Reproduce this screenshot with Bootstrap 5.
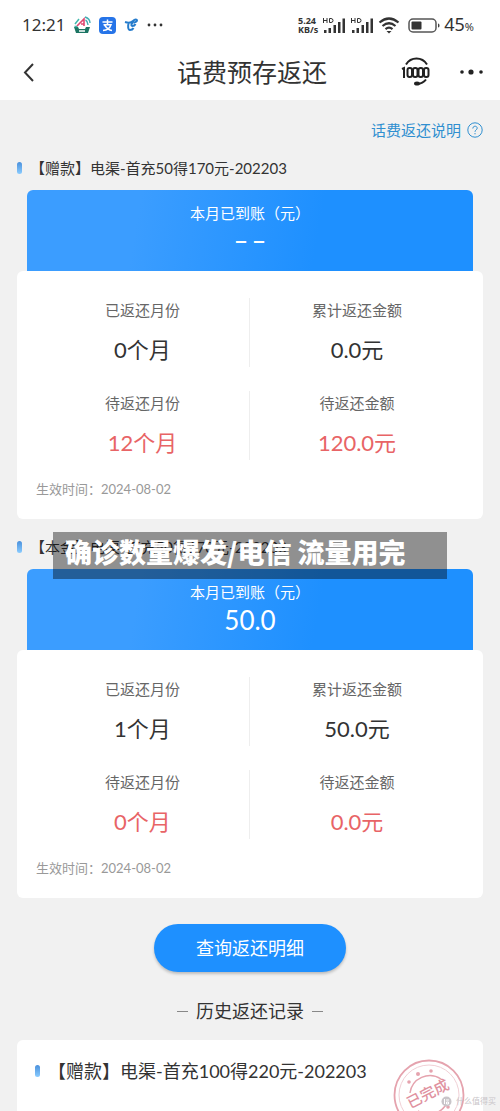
<!DOCTYPE html>
<html lang="zh-CN">
<head>
<meta charset="utf-8">
<meta name="viewport" content="width=device-width, initial-scale=1">
<title>话费预存返还</title>
<link href="https://cdn.jsdelivr.net/npm/bootstrap@5.3.0/dist/css/bootstrap.min.css" rel="stylesheet">
<style>
  body { font-family: Lato, "Noto Sans CJK SC", sans-serif; background: #f1f1f1; color: #333; font-size: 15px; line-height: 24px; overflow-x: hidden; }
  svg { display: block; flex: none; }
  .status { height: 50px; padding: 0 26px 0 22px; font-size: 17px; font-family: "Noto Sans", sans-serif; }
  .speed { font-size: 9px; line-height: 9px; font-weight: 700; }
  .battery-level { font-size: 18px; }
  .battery-level small { font-size: 11px; }
  .app-bar { height: 50px; padding: 0 16px 6px 20px; }
  .app-bar h1 { font-size: 25px; line-height: 36px; font-weight: 400; }
  .side { flex: 1 1 0; }
  .actions { gap: 27px; }
  .icon-btn { display: block; border: 0; background: none; padding: 0; color: #333; }
  .page { padding: 0 17px; }
  .help { height: 46px; padding-top: 14px; gap: 6px; color: #2f8fd0; }
  .plan { margin-bottom: 6px; }
  .plan-title { height: 44px; font-size: 15px; font-weight: 400; }
  .pill { width: 5px; height: 12px; border-radius: 3px; background: linear-gradient(#4a90dc, #8accff); flex: none; }
  .credit { margin: 0 10px; height: 81px; padding-top: 11px; border-radius: 6px 6px 0 0; color: #fff; background: linear-gradient(100deg, #3b9dff 25%, #1e90ff 65%); }
  .amount { font-size: 26px; line-height: 32px; }
  .amount-none { font-family: "Noto Sans", sans-serif; font-size: 24px; line-height: 28px; font-weight: 500; }
  .panel { background: #fff; border-radius: 6px; padding: 27px 19px 20px; }
  .stats { row-gap: 24px; }
  .stat { color: #666; }
  .stat:nth-child(odd) { border-right: 1px solid #eee; }
  .stat dd { font-size: 22px; line-height: 32px; margin: 12px 0 1px; color: #333; }
  .stat dt { font-weight: 400; }
  .stat .due { color: #e86466; }
  .since { font-size: 13px; line-height: 20px; color: #999; margin-top: 19px; }
  .caption { top: 7px; left: 36px; right: 36px; height: 47px; padding: 0 12px; background: rgba(0,0,0,.4); color: #fff; font-size: 27px; line-height: 40px; font-weight: 900; font-family: "Noto Sans CJK SC", sans-serif; }
  .detail-btn { width: 41%; height: 48px; margin-top: 20px; border: 0; background: #1e90ff; color: #fff; font-size: 18px; box-shadow: 0 2px 3px rgba(0,0,0,.22); }
  .detail-btn:hover { background: #1e90ff; color: #fff; }
  .history-title { font-size: 18px; font-weight: 400; line-height: 28px; margin: 25px 0 15px; }
  .rule { width: 11px; height: 1px; background: #888; }
  .record { background: #fff; border-radius: 6px 6px 0 0; height: 71px; padding: 17px 18px 0; overflow: hidden; }
  .record h3 { font-size: 18px; line-height: 28px; font-weight: 400; }
  .stamp { right: 16px; top: 17px; }
  .credit-mark { right: 4px; bottom: 4px; font-size: 8px; line-height: 12px; color: #c9c5c9; }
</style>
</head>
<body>
<header class="bg-white">
  <div class="status d-flex align-items-center justify-content-between">
    <div class="d-flex align-items-center gap-2">
      <span>12:21</span>
      <svg width="18" height="18" viewBox="0 0 18 18" fill="none"><path d="M1 11h4l1 2h6l1-2h4l-2 6H3z" fill="#1c7563"/><path d="M6 15h6" stroke="#fff" stroke-width="1.500"/><path d="M2 8l4-5M1.500 10.500h3" stroke="#42b7ac" stroke-width="1.500"/><path d="M4 10l7-7v7M8 8h3" stroke="#df4770" stroke-width="1.600"/><path d="M12 1c3 1 5 3 5 6M12.500 4c2 1 2 2 2.500 5" stroke="#42aeb4" stroke-width="1.400"/></svg>
      <svg width="17" height="17" viewBox="0 0 17 17"><rect width="17" height="17" rx="4" fill="#2674e8"/><path d="M3.500 5h10M8.500 2.500v5M4.500 7.800h7.500c-1 3-4 5.500-8 5.700M5.500 8c2 3 4 5 7.500 5.500" fill="none" stroke="#fff" stroke-width="1.500"/></svg>
      <svg width="14" height="14" viewBox="0 0 14 14" fill="none" stroke="#267ccc" stroke-width="2"><path d="M1 4c3 1 6 1 8-1 2-2 4-2 4-.5 0 1-2 2-3.500 2M5 4c-1.500 4-1 8 1 8 1.500 0 3-1 3.500-2M9 4c-2 2-2 4-.5 4 1.500 0 2.500-1 3-2"/></svg>
      <svg width="17" height="6" viewBox="0 0 17 6" fill="#333"><circle cx="3" cy="3" r="1.400"/><circle cx="9" cy="3" r="1.400"/><circle cx="15" cy="3" r="1.400"/></svg>
    </div>
    <div class="d-flex align-items-center gap-1">
      <div class="speed">5.24<br>KB/s</div>
      <svg width="24" height="18" viewBox="0 0 24 18" fill="#333"><path d="M2 14h2.500v3H2zM6.500 12H9v5H6.500zM11.500 9H14v8h-2.500zM16 6h2.500v11H16zM20.500 2.500H23V17h-2.500z"/><path d="M1.500 2v5M5 2v5M1.500 4.500H5M7.500 2.500v4h1.500q2 0 2-2t-2-2z" fill="none" stroke="#333"/></svg>
      <svg width="24" height="18" viewBox="0 0 24 18" fill="#333"><path d="M2 14h2.500v3H2zM6.500 12H9v5H6.500zM11.500 9H14v8h-2.500zM16 6h2.500v11H16zM20.500 2.500H23V17h-2.500z"/><path d="M1.500 2v5M5 2v5M1.500 4.500H5M7.500 2.500v4h1.500q2 0 2-2t-2-2z" fill="none" stroke="#333"/></svg>
      <svg width="22" height="18" viewBox="0 0 22 18" fill="none" stroke="#333" stroke-width="2.200"><path d="M1.500 6.500q9.500-8 19 0M4.500 10q6.500-5.500 13 0M7.500 13.200q3.500-3 7 0"/><path d="M8.500 15h5L11 17.500z" fill="#333" stroke="none"/></svg>
      <svg class="ms-1" width="32" height="15" viewBox="0 0 32 15"><rect x="1" y="1" width="27" height="13" rx="4" fill="none" stroke="#555" stroke-width="1.500"/><rect x="3.500" y="3.500" width="10" height="8" rx="1" fill="#333"/><path d="M30 5.500c2 0 2 4 0 4z" fill="#444"/></svg>
      <span class="battery-level">45<small>%</small></span>
    </div>
  </div>
  <nav class="app-bar d-flex align-items-center">
    <div class="side"><button class="icon-btn" aria-label="返回"><svg width="18" height="20" viewBox="0 0 18 20" fill="none" stroke="#333" stroke-width="2"><path d="M13 2L5 10.500l8 8.500"/></svg></button></div>
    <h1 class="m-0">话费预存返还</h1>
    <div class="side actions d-flex align-items-center justify-content-end">
      <button class="icon-btn" aria-label="客服"><svg width="30" height="30" viewBox="0 0 30 30" fill="none" stroke="#222" stroke-width="2"><path d="M5 7.500c5-8 16-8 21 0"/><path d="M1 12l2-1v10"/><rect x="6.500" y="11" width="4.500" height="9" rx="2"/><rect x="12" y="11" width="4.500" height="9" rx="2"/><rect x="17.500" y="11" width="4.500" height="9" rx="2"/><rect x="23" y="11" width="4.500" height="9" rx="2"/><path d="M25 22.500q-3 4-9 4.500"/><ellipse cx="16" cy="26.500" rx="3" ry="2" fill="#222" stroke="none"/></svg></button>
      <button class="icon-btn" aria-label="更多"><svg width="26" height="8" viewBox="0 0 26 8" fill="#222"><circle cx="4" cy="4" r="1.800"/><circle cx="13" cy="4" r="2.600"/><circle cx="23" cy="4" r="1.800"/></svg></button>
    </div>
  </nav>
</header>

<main class="page position-relative">
  <div class="d-flex justify-content-end">
    <a href="#" class="help d-flex align-items-center text-decoration-none">话费返还说明
      <svg width="16" height="16" viewBox="0 0 16 16" fill="none" stroke="#2f8fd0"><circle cx="8" cy="8" r="7.200"/><path d="M5.800 6.500c0-3 4.400-3 4.400-.3 0 1.500-2.200 1.800-2.200 3.600M8 11v1.300"/></svg>
    </a>
  </div>

  <section class="plan">
    <h2 class="plan-title d-flex align-items-center gap-2 m-0"><span class="pill"></span>【赠款】电渠-首充50得170元-202203</h2>
    <div class="credit text-center"><div>本月已到账（元）</div><div class="amount amount-none">– –</div></div>
    <div class="panel">
      <dl class="stats row g-0 text-center m-0">
        <div class="stat col-6"><dt>已返还月份</dt><dd>0个月</dd></div>
        <div class="stat col-6"><dt>累计返还金额</dt><dd>0.0元</dd></div>
        <div class="stat col-6"><dt>待返还月份</dt><dd class="due">12个月</dd></div>
        <div class="stat col-6"><dt>待返还金额</dt><dd class="due">120.0元</dd></div>
      </dl>
      <div class="since">生效时间：2024-08-02</div>
    </div>
  </section>

  <section class="plan position-relative">
    <h2 class="plan-title d-flex align-items-center gap-2 m-0"><span class="pill"></span>【本金】电渠-首充50得170元-202203</h2>
    <div class="credit text-center"><div>本月已到账（元）</div><div class="amount">50.0</div></div>
    <div class="caption position-absolute text-nowrap">确诊数量爆发/电信 流量用完</div>
    <div class="panel">
      <dl class="stats row g-0 text-center m-0">
        <div class="stat col-6"><dt>已返还月份</dt><dd>1个月</dd></div>
        <div class="stat col-6"><dt>累计返还金额</dt><dd>50.0元</dd></div>
        <div class="stat col-6"><dt>待返还月份</dt><dd class="due">0个月</dd></div>
        <div class="stat col-6"><dt>待返还金额</dt><dd class="due">0.0元</dd></div>
      </dl>
      <div class="since">生效时间：2024-08-02</div>
    </div>
  </section>

  <div class="text-center"><button class="detail-btn btn rounded-pill p-0">查询返还明细</button></div>
  <h2 class="history-title d-flex justify-content-center align-items-center gap-2"><span class="rule"></span>历史返还记录<span class="rule"></span></h2>

  <article class="record position-relative">
    <h3 class="d-flex align-items-center gap-2 m-0"><span class="pill"></span>【赠款】电渠-首充100得220元-202203</h3>
    <svg class="stamp position-absolute" width="76" height="76" viewBox="0 0 76 76" fill="none" stroke="#e5a3ae">
      <circle cx="38" cy="38" r="34.500" stroke-width="1.800"/><circle cx="38" cy="38" r="30" stroke="#f0cfd5"/>
      <path d="M19 36A20 20 0 0 1 50 22M27 54A20 20 0 0 0 57 43" stroke-width="1.500"/>
      <g fill="#e5a3ae" stroke="none"><circle cx="18" cy="25" r="1.800"/><circle cx="27" cy="17" r="2"/><circle cx="40" cy="14" r="1.800"/><circle cx="57" cy="50" r="1.800"/></g>
      <text x="37" y="42" text-anchor="middle" transform="rotate(-27 37 37)" fill="#e0929f" stroke="none" font-size="15" font-weight="500">已完成</text>
    </svg>
  </article>
  <div class="credit-mark position-absolute text-nowrap d-flex align-items-center gap-1">
    <svg width="11" height="11" viewBox="0 0 11 11"><circle cx="5.500" cy="5.500" r="5" fill="#c9c5c9"/><path d="M3.500 3v5M5 4h3M5.500 6h2v2h-2z" stroke="#fff" fill="none"/></svg>
    什么值得买
  </div>
</main>
<script src="https://cdn.jsdelivr.net/npm/bootstrap@5.3.0/dist/js/bootstrap.bundle.min.js"></script>
</body>
</html>
